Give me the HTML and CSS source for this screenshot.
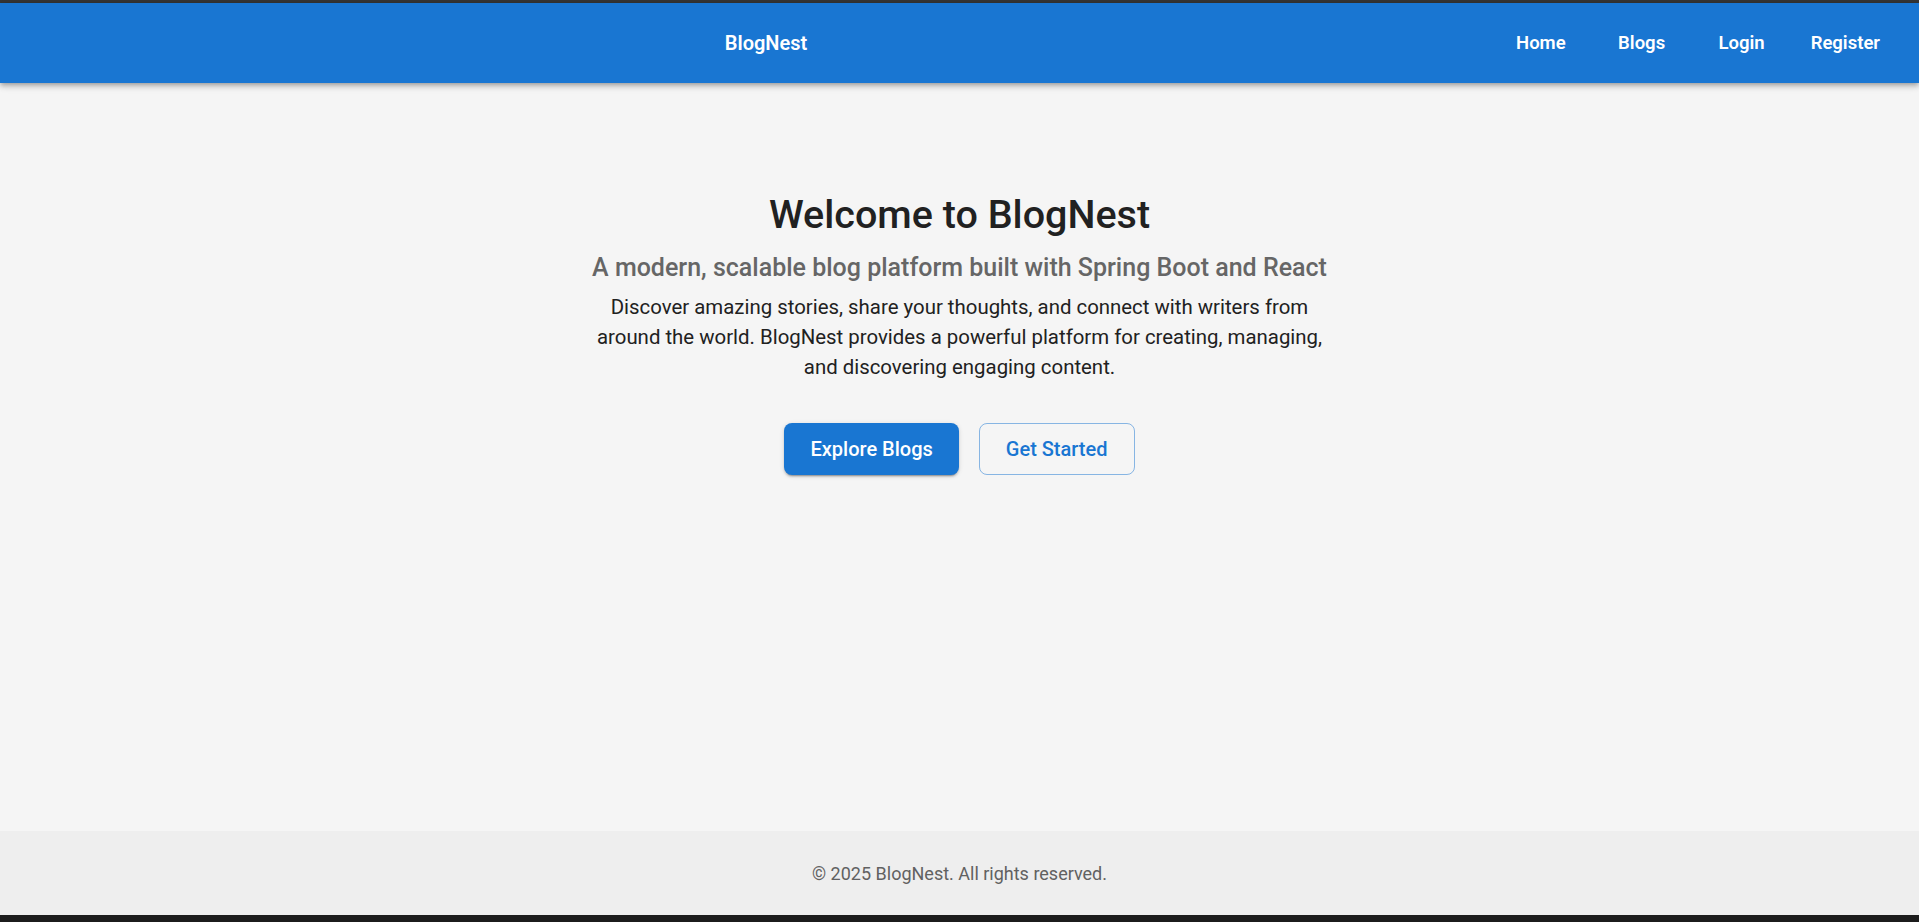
FILE: index.html
```html
<!DOCTYPE html>
<html lang="en">
<head>
<meta charset="utf-8">
<title>BlogNest</title>
<link rel="stylesheet" href="styles.css">
</head>
<body>
<div class="app">
  <div class="topbar"></div>
  <header class="header">
    <div class="brand-wrap"><span class="brand">BlogNest</span></div>
    <nav class="nav">
      <a class="nav-link" href="#">Home</a>
      <a class="nav-link" href="#">Blogs</a>
      <a class="nav-link" href="#">Login</a>
      <a class="nav-link nav-link-register" href="#">Register</a>
    </nav>
  </header>
  <main class="main">
    <section class="hero">
      <h1 class="hero-title">Welcome to BlogNest</h1>
      <h2 class="hero-subtitle">A modern, scalable blog platform built with Spring Boot and React</h2>
      <p class="hero-text">Discover amazing stories, share your thoughts, and connect with writers from around the world. BlogNest provides a powerful platform for creating, managing, and discovering engaging content.</p>
      <div class="hero-actions">
        <a class="btn btn-primary" href="#">Explore Blogs</a>
        <a class="btn btn-outline" href="#">Get Started</a>
      </div>
    </section>
  </main>
  <footer class="footer">
    <p class="footer-text">© 2025 BlogNest. All rights reserved.</p>
  </footer>
  <div class="bottombar"></div>
</div>
</body>
</html>
```

FILE: styles.css
```css
* { box-sizing: border-box; }

html, body {
  margin: 0;
  padding: 0;
  height: 100%;
}

body {
  font-family: Roboto, "Noto Sans", Arial, sans-serif;
  background: #f5f5f5;
  color: #212121;
}

.app {
  display: flex;
  flex-direction: column;
  height: 100vh;
}

.topbar {
  height: 3px;
  background: #353535;
  flex: none;
}

.header {
  flex: none;
  height: 80px;
  background: #1976d2;
  display: flex;
  align-items: center;
  padding: 0 23px 0 32px;
  position: relative;
  z-index: 2;
  box-shadow: 0 2px 4px -1px rgba(0,0,0,0.2), 0 4px 5px 0 rgba(0,0,0,0.14), 0 1px 10px 0 rgba(0,0,0,0.12);
}

.brand-wrap {
  flex: 1;
  text-align: center;
}

.brand {
  color: #fff;
  font-size: 20px;
  font-weight: 600;
}

.nav {
  display: flex;
  align-items: center;
  gap: 20px;
}

.nav-link {
  color: #fff;
  text-decoration: none;
  font-size: 18.5px;
  font-weight: 600;
  min-width: 80px;
  padding: 8px 16px;
  text-align: center;
}

.nav-link-register {
  padding-left: 9px;
}

.main {
  flex: 1;
  padding-top: 109px;
}

.hero {
  display: flex;
  flex-direction: column;
  align-items: center;
  text-align: center;
}

.hero-title {
  margin: 0;
  font-size: 39.5px;
  font-weight: 500;
  line-height: 46px;
  color: #212121;
}

.hero-subtitle {
  margin: 14px 0 0;
  font-size: 25px;
  font-weight: 500;
  line-height: 32px;
  color: #666;
}

.hero-text {
  margin: 8px 0 0;
  max-width: 750px;
  font-size: 20.4px;
  line-height: 30px;
  color: #212121;
}

.hero-actions {
  display: flex;
  gap: 20px;
  margin-top: 41px;
}

.btn {
  display: inline-block;
  font-size: 20px;
  font-weight: 500;
  line-height: 28px;
  padding: 11px 26px;
  border-radius: 8px;
  text-decoration: none;
  border: 1px solid transparent;
}

.btn-primary {
  background: #1976d2;
  color: #fff;
  padding-left: 25px;
  padding-right: 25px;
  box-shadow: 0 3px 1px -2px rgba(0,0,0,0.2), 0 2px 2px 0 rgba(0,0,0,0.14), 0 1px 5px 0 rgba(0,0,0,0.12);
}

.btn-outline {
  color: #1976d2;
  border-color: rgba(25,118,210,0.5);
  background: transparent;
}

.footer {
  flex: none;
  height: 84px;
  background: #eeeeee;
  display: flex;
  align-items: center;
  justify-content: center;
}

.footer-text {
  margin: 0;
  font-size: 18px;
  color: #616161;
}

.bottombar {
  flex: none;
  height: 7px;
  background: #1c1c1c;
}
```
